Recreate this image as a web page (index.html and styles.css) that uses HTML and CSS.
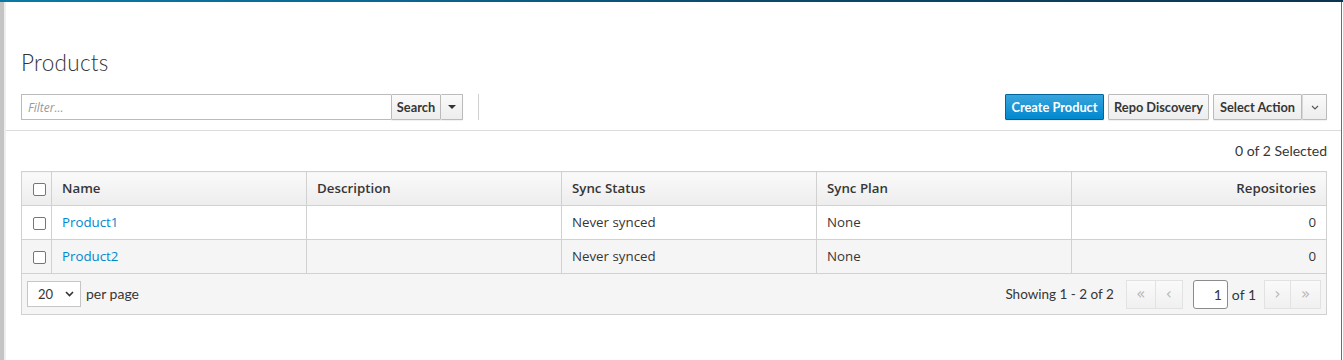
FILE: index.html
```html
<!DOCTYPE html>
<html>
<head>
<meta charset="utf-8">
<title>Products</title>
<link rel="stylesheet" href="styles.css">
</head>
<body>
<div class="topbar"></div>
<div class="layout">
  <div class="edge"></div>
  <main class="main">
    <header class="page-header">
      <h1 class="title">Products</h1>
      <div class="toolbar">
        <div class="search-group">
          <input class="filter" type="text" placeholder="Filter...">
          <button class="btn btn-search">Search</button>
          <button class="btn btn-caret"><span class="tri"></span></button>
        </div>
        <div class="vsep"></div>
        <div class="spacer"></div>
        <div class="actions">
          <button class="btn btn-primary">Create Product</button>
          <button class="btn">Repo Discovery</button>
          <div class="split">
            <button class="btn">Select Action</button>
            <button class="btn btn-chev">
              <svg width="8" height="5" viewBox="0 0 8 5"><path d="M1 1l3 3 3-3" fill="none" stroke="#555" stroke-width="1.1"/></svg>
            </button>
          </div>
        </div>
      </div>
    </header>
    <section class="content">
      <div class="selected">0 of 2 Selected</div>
      <div class="table-wrap">
        <table class="grid">
          <thead>
            <tr>
              <th class="c-check"><span class="cb"></span></th>
              <th>Name</th>
              <th>Description</th>
              <th>Sync Status</th>
              <th>Sync Plan</th>
              <th class="num">Repositories</th>
            </tr>
          </thead>
          <tbody>
            <tr>
              <td class="c-check"><span class="cb"></span></td>
              <td><a href="#">Product1</a></td>
              <td></td>
              <td>Never synced</td>
              <td>None</td>
              <td class="num">0</td>
            </tr>
            <tr class="alt">
              <td class="c-check"><span class="cb"></span></td>
              <td><a href="#">Product2</a></td>
              <td></td>
              <td>Never synced</td>
              <td>None</td>
              <td class="num">0</td>
            </tr>
          </tbody>
        </table>
        <div class="pager">
          <div class="per-page">
            <div class="select">20
              <svg width="9" height="6" viewBox="0 0 9 6"><path d="M1 1l3.5 3.5L8 1" fill="none" stroke="#333" stroke-width="1.6"/></svg>
            </div>
            <span>per page</span>
          </div>
          <div class="pages">
            <span class="showing">Showing 1 - 2 of 2</span>
            <div class="pbtns">
              <button class="pbtn pw">&laquo;</button>
              <button class="pbtn">&lsaquo;</button>
            </div>
            <div class="page-input">1</div>
            <span class="of">of 1</span>
            <div class="pbtns">
              <button class="pbtn">&rsaquo;</button>
              <button class="pbtn pw">&raquo;</button>
            </div>
          </div>
        </div>
      </div>
    </section>
  </main>
</div>
</body>
</html>
```

FILE: styles.css
```css
* { box-sizing: border-box; }
html, body { margin: 0; padding: 0; background: #fff; }
body {
  font-family: "Open Sans", "Liberation Sans", sans-serif;
  font-size: 13px;
  color: #363636;
  width: 1343px;
  height: 360px;
  overflow: hidden;
}
.topbar {
  height: 2px;
  background: linear-gradient(90deg, #0b79a5 0%, #0a6690 30%, #0b4a6c 55%, #0a3550 100%);
}
.layout {
  display: flex;
  height: 358px;
}
.edge {
  width: 6px;
  flex: none;
  border-left: 4px solid #c4c4c4;
  background: #eeeeee;
}
.main {
  flex: 1;
  border-right: 1px solid #6c6c6c;
  margin-right: 1px;
  background: #fff;
}
.page-header {
  padding: 48px 14px 10px 15px;
  border-bottom: 1px solid #dcdcdc;
}
.title {
  margin: 0;
  font-family: "Lato", "Open Sans", sans-serif;
  font-weight: 300;
  font-size: 22.5px;
  line-height: 26px;
  color: #333;
  letter-spacing: 0.3px;
}
.toolbar {
  display: flex;
  align-items: center;
  margin-top: 18px;
  height: 26px;
}
.search-group { display: flex; height: 26px; }
.filter {
  width: 370px;
  height: 26px;
  border: 1px solid #bbb;
  border-right: none;
  padding: 2px 6px;
  font-family: "Open Sans", sans-serif;
  font-size: 12px;
  color: #333;
  outline: none;
}
.filter::placeholder { color: #999; font-style: italic; }
.btn {
  height: 26px;
  border: 1px solid #bbb;
  background: linear-gradient(#fafafa, #ededed);
  font-family: "Lato", "Open Sans", sans-serif;
  font-weight: 700;
  font-size: 12.8px;
  color: #363636;
  padding: 0 5px;
  border-radius: 1px;
  cursor: pointer;
  display: inline-flex;
  align-items: center;
  justify-content: center;
  white-space: nowrap;
  box-shadow: 0 1px 1px rgba(3,3,3,0.06);
}
.btn-search { width: 50px; padding: 0; }
.btn-caret { width: 22px; padding: 0; border-left: none; }
.tri {
  width: 0; height: 0;
  border-left: 4px solid transparent;
  border-right: 4px solid transparent;
  border-top: 4px solid #333;
}
.vsep {
  width: 1px;
  height: 26px;
  background: #d1d1d1;
  margin-left: 15px;
}
.spacer { flex: 1; }
.actions { display: flex; gap: 4px; }
.btn-primary {
  background: linear-gradient(#39a5dc, #0088ce);
  border-color: #00659c;
  color: #fff;
  width: 99px;
}
.actions > .btn:nth-child(2) { width: 101px; }
.split { display: flex; }
.split .btn:first-child { width: 89px; }
.btn-chev { width: 25px; padding: 0; border-left-color: #d8d8d8; }
.content { padding: 0 14px 0 15px; }
.selected {
  margin-top: 11px;
  text-align: right;
  font-family: "Lato", "Open Sans", sans-serif;
  font-size: 14px;
  line-height: 18px;
  color: #363636;
}
.table-wrap { margin-top: 11px; }
.grid {
  width: 100%;
  border-collapse: collapse;
  table-layout: fixed;
}
.grid th, .grid td {
  border: 1px solid #d1d1d1;
  height: 34px;
  padding: 0 10px 2px;
  text-align: left;
  vertical-align: middle;
  white-space: nowrap;
}
.grid th {
  background: linear-gradient(#fafafa, #ededed);
  font-weight: 600;
  font-size: 13.3px;
  color: #363636;
}
.grid td { font-size: 13.3px; color: #363636; }
.grid .c-check { width: 30px; padding: 2px 0 0 11px; }
.grid th:nth-child(2), .grid td:nth-child(2) { width: 255px; }
.grid th:nth-child(3), .grid td:nth-child(3) { width: 255px; }
.grid th:nth-child(4), .grid td:nth-child(4) { width: 255px; }
.grid th:nth-child(5), .grid td:nth-child(5) { width: 255px; }
.grid .num { text-align: right; }
.grid tr.alt td { background: #f5f5f5; }
.grid a { color: #0088ce; text-decoration: none; }
.cb {
  display: block;
  width: 13px;
  height: 13px;
  border: 1px solid #767676;
  border-radius: 2px;
  background: #fff;
}
.pager {
  display: flex;
  align-items: center;
  justify-content: space-between;
  height: 41px;
  border: 1px solid #d1d1d1;
  border-top: none;
  background: #f5f5f5;
  padding: 0 5px 0 5px;
}
.per-page { display: flex; align-items: center; gap: 5px; }
.select {
  width: 54px;
  height: 26px;
  background: #fff;
  border: 1px solid #c6c6c6;
  display: flex;
  align-items: center;
  justify-content: space-between;
  padding: 0 6px 0 10px;
  font-family: "Lato", "Open Sans", sans-serif;
  font-size: 13px;
  color: #363636;
}
.per-page span, .showing, .of {
  font-family: "Lato", "Open Sans", sans-serif;
  font-size: 14px;
  color: #363636;
}
.per-page span { margin-top: -2px; }
.pages { display: flex; align-items: center; }
.showing { margin-right: 12px; font-size: 13.5px; }
.pbtns { display: flex; }
.pbtn {
  width: 27px;
  height: 29px;
  border: 1px solid #e2e2e2;
  background: linear-gradient(#fafafa, #f0f0f0);
  color: #b5b5b5;
  font-size: 15px;
  font-family: "DejaVu Sans", sans-serif;
  padding: 0;
  display: flex;
  align-items: center;
  justify-content: center;
}
.pbtn + .pbtn { border-left: none; }
.pbtn.pw { width: 30px; }
.page-input {
  width: 35px;
  height: 29px;
  margin-left: 10px;
  border: 1px solid #8b8b8b;
  border-radius: 3px;
  background: #fff;
  text-align: right;
  padding: 0 5px;
  line-height: 27px;
  font-family: "Lato", "Open Sans", sans-serif;
  font-size: 14px;
  color: #363636;
}
.of { margin: 0 8px 0 4px; }
```
